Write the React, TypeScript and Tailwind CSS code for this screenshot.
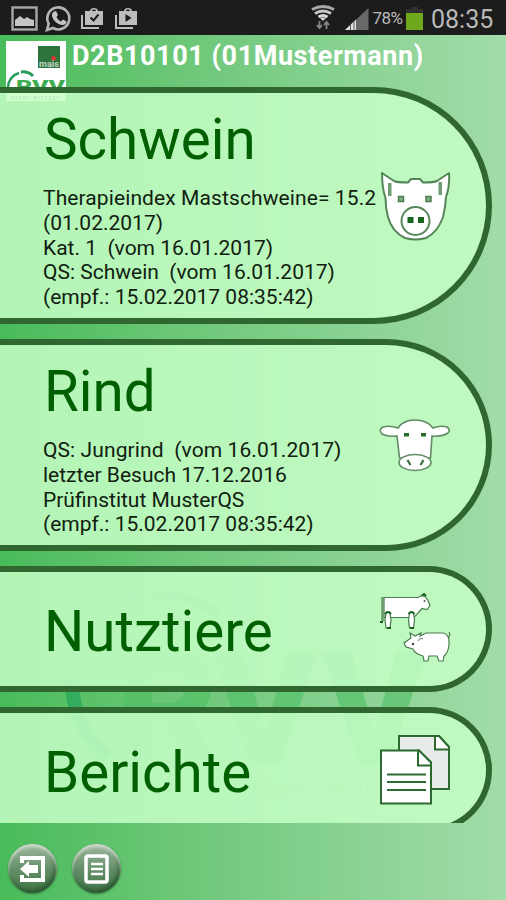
import React from 'react';

const ROBOTO = "font-['Roboto','Liberation_Sans',sans-serif]";

function StatusBar() {
  return (
    <div className="flex h-[35px] shrink-0 items-center bg-[#1c1c1c] text-[#b9b9b9]">
      <svg width="150" height="35" viewBox="0 0 150 35" fill="none">
        <rect x="12.5" y="7.5" width="24" height="22" stroke="#a9a9a9" strokeWidth="2.4" />
        <path d="M15 26v-6l5-4 4 3 3-2 3 2 4 1v6z" fill="#c4c4c4" />
        <path d="M47 30l1.700-6.300a11 11 0 1 1 4.300 4.300z" stroke="#b5b5b5" strokeWidth="2.600" />
        <path d="M54 11.500l2-.5 2 4-1.500 2c1 2 2.500 3.500 4.500 4.500l2-2 3.500 2c0 2.500-2 3.500-4 3.500-5 0-10.500-5.500-10.500-10 0-1.500.8-3 2-3.500z" fill="#c4c4c4" />
        <g fill="#bdbdbd">
          <path d="M81 15v14h18v-2H83V15z" />
          <path d="M85 11h5c0-4 8-4 8 0h5v14H85zM92 11h4c0-2-4-2-4 0z" fillRule="evenodd" />
          <path d="M115 15v14h18v-2h-16V15z" />
          <path d="M119 11h5c0-4 8-4 8 0h5v14h-18zM126 11h4c0-2-4-2-4 0z" fillRule="evenodd" />
        </g>
        <path d="M90.500 17.500l3 3 5-6" stroke="#1c1c1c" strokeWidth="2" />
        <path d="M125.500 14v8l6-4z" fill="#1c1c1c" />
      </svg>
      <svg className="ml-auto" width="62" height="35" viewBox="310 0 62 35" fill="none">
        <g stroke="#a8a8a8" strokeWidth="2.800">
          <path d="M313 9.500q11-6 22 0" />
          <path d="M316 13.500q8-5 16 0" stroke="#c8c8c8" />
          <path d="M319.500 17q4.500-3 9 0" stroke="#d8d8d8" />
        </g>
        <path d="M324 21l-3.500-3.500h7z" fill="#d8d8d8" />
        <path d="M320.500 21v7m-2.500-3l2.500 3 2.500-3M327.500 29v-7m-2.500 3l2.500-3 2.500 3" stroke="#888" strokeWidth="1.800" />
        <path d="M346 30l23.500-22v22z" fill="#686868" />
        <path d="M346 30l11-10.500V30z" fill="#e0e0e0" />
        <path d="M351.500 24v6M355 21v9" stroke="#555" strokeWidth="1" />
      </svg>
      <span className="mt-[2px] w-[35px] whitespace-nowrap pl-[1.500px] text-[17px] leading-none tracking-[-0.6px]">78%</span>
      <svg width="18" height="35" viewBox="0 0 18 35">
        <path d="M5 7h7v2h5v4H0V9h5z" fill="#303030" />
        <rect x="0" y="13" width="17" height="17" fill="#6fa81c" />
      </svg>
      <span className="ml-[7px] mt-[3px] w-[75px] text-[25px] leading-none">08:35</span>
    </div>
  );
}

function CompanyLogo() {
  return (
    <svg className="ml-[6px] mt-[6px] shrink-0" width="60" height="60" viewBox="0 0 60 60">
      <rect width="60" height="60" fill="#fff" />
      <rect x="32" y="5" width="22" height="22" fill="#2c743c" />
      <circle cx="47.500" cy="17.500" r="2.400" fill="#d63a2c" />
      <text x="33" y="26" fontSize="9" fontWeight="700" fill="#c5d2c5" textLength="20" lengthAdjust="spacingAndGlyphs">mais</text>
      <path d="M2 46a15 15 0 0 1 11-14" fill="none" stroke="#279b5a" strokeWidth="2.500" />
      <path d="M15 31q7-1 12 4" fill="none" stroke="#279b5a" strokeWidth="3" />
      <text x="10" y="51" fontSize="17" fontWeight="900" fill="#3cae50" textLength="49" lengthAdjust="spacingAndGlyphs">RVV</text>
      <text x="5" y="58.500" fontSize="4.500" fontWeight="700" fill="#527a52" textLength="48">STORF-WISTEDT</text>
    </svg>
  );
}

function Watermark() {
  return (
    <svg className="absolute left-0 top-[560px]" width="506" height="263" viewBox="0 560 506 263" fill="none">
      <path d="M72 680Q72 728 108 757" stroke="#2aa65c" strokeWidth="14" opacity=".8" />
      <path d="M98 615Q120 596 145 592M153 594Q190 594 220 615" stroke="#42b468" strokeWidth="9" opacity=".45" />
      <text x="116 213 322" y="764" fontSize="158" fontWeight="900" fill="#50c065" opacity=".62">RVV</text>
      <text x="252" y="795" fontSize="17" fill="#65a46c" opacity=".5" textLength="145">STORF – WISTEDT</text>
    </svg>
  );
}

function PigHead() {
  return (
    <svg width="72" height="72" viewBox="0 0 72 72" fill="#fff" stroke="#55865a" strokeWidth="2">
      <path d="M3 3l12 8q3 1.500 14 1.500l3-3.500h9l3 3.500q11 0 14-1.500L70 3q1 13-3 24-.5 10-3 20-5 15-17 21-10 3-21 0Q13 62 9 47 6.500 38 6.500 28 3 18 3 3z" strokeLinejoin="round" />
      <circle cx="36.500" cy="51" r="14" />
      <g fill="#6f9c73" stroke="none">
        <rect x="9" y="13" width="3.500" height="13" />
        <rect x="59.500" y="12" width="3.500" height="13" />
      </g>
      <g fill="#7fae82" stroke="#4c7c50" strokeWidth="1.500">
        <rect x="19.500" y="26.500" width="5" height="5" />
        <rect x="47" y="26.500" width="5" height="5" />
      </g>
      <g fill="#17651c" stroke="none">
        <rect x="28.500" y="47" width="6" height="6" />
        <rect x="39" y="47" width="6" height="6" />
      </g>
    </svg>
  );
}

function CowHead() {
  return (
    <svg width="72" height="54" viewBox="0 0 72 54" fill="#fff" stroke="#618b65" strokeWidth="1.600">
      <path d="M19 10Q24 2 36 2t18 8q7-3 14-1 4 3 1 6-6 4-16 3l-1.500 22h-31L18 18Q9 19 3 16q-4-4 1-7 7-2 15 1z" />
      <ellipse cx="36" cy="44.500" rx="16" ry="8" />
      <path d="M28.500 42l3 5m13-5l-3 5" stroke="#386e3c" strokeWidth="2.200" />
      <path d="M25 15h5v3.500h-5zM42 15h5v3.500h-5z" fill="#24702b" stroke="none" />
    </svg>
  );
}

function CowAndPig() {
  return (
    <svg width="72" height="72" viewBox="0 0 72 72" fill="#fff" stroke="#4a7c4f" strokeWidth="1.200">
      <path d="M5 4.500h34l4-2 3 1 3 4 2 5-3 4-5-1-8 9H5z" />
      <path d="M3.500 4v24" stroke="#6a9a6e" strokeWidth="2.500" />
      <path d="M7 35l-1-8 1-7h4l1 7-1 8zM30.500 35l-1-8 1-7h4l1 7-1 8z" />
      <path d="M6 21q3-4 6 0M29.500 21q3-4 6 0M43 3l2-2 2 2M1 29h3M8 35h4M31 35h4" stroke="#17601c" strokeWidth="2" />
      <circle cx="45.500" cy="8" r="1" fill="#555" stroke="none" />
      <path d="M32 45l-1-5 5 3 6-3-1 3 6-3h17q7 1 6 12-1 8-5 11l-1 5h-4l-2-5H50l-1 5h-4l-1-5q-8-2-10-7l-7-2-2-4z" />
      <path d="M69 45q3-3 1-6" fill="none" />
      <path d="M39 48q3-4 5-2" fill="none" stroke="#888" />
      <circle cx="34" cy="51" r="1.200" fill="#444" stroke="none" />
    </svg>
  );
}

function Documents() {
  return (
    <svg width="72" height="72" viewBox="0 0 72 72" fill="#fff" stroke="#2c6a31" strokeWidth="2">
      <path d="M20 2h40l10 11v42H20z" fill="#e8ece8" />
      <path d="M56 2v13.500h14V13L60 2z" />
      <path d="M2 16.500h38l12 12v41H2z" />
      <path d="M39 16.500v15h13v-3l-12-12zM8 40.500h39M8 48h39M8 56h39" />
    </svg>
  );
}

type CardProps = {
  title: string;
  lines?: string[];
  icon: React.ReactNode;
  className: string;
};

function MenuCard({ title, lines, icon, className }: CardProps) {
  return (
    <div className={`flex w-[492px] shrink-0 items-center justify-between rounded-r-full border-y-[6px] border-r-[6px] border-[#306630] bg-[#c6ffc6]/85 pl-[43px] pr-[35px] ${className}`}>
      <div className="w-0 whitespace-pre pt-[6px]">
        <h2 className="ml-[1px] text-[56.5px] leading-[66px] text-[#005f00]">{title}</h2>
        {lines && (
          <div className="mt-[13px] text-[21px] leading-[24.8px] text-[#10200f] first-line:tracking-[0.1px]">
            {lines.map((line) => (
              <p key={line}>{line}</p>
            ))}
          </div>
        )}
      </div>
      {icon}
    </div>
  );
}

function RoundButton({ children }: { children: React.ReactNode }) {
  return (
    <button className="flex size-[49px] items-center justify-center rounded-full bg-linear-to-b from-[#9fb9a1] via-[#66906a] to-[#3f7545] shadow-[inset_0_3px_3px_#cad8ca,inset_-2px_-3px_4px_#2d5832,0_1px_2px_#397d42]">
      {children}
    </button>
  );
}

export default function App() {
  return (
    <div className={`relative flex h-[900px] w-[506px] flex-col overflow-hidden bg-linear-to-r from-[#48bb5a] to-[#a2dcaa] ${ROBOTO}`}>
      <Watermark />
      <StatusBar />
      <header className="flex h-[52px] shrink-0">
        <CompanyLogo />
        <h1 className="ml-[6px] mt-[5px] whitespace-nowrap text-[27px] font-bold leading-[32px] tracking-[0.57px] text-white">D2B10101 (01Mustermann)</h1>
      </header>

      <main className="relative flex h-[736px] shrink-0 flex-col gap-[15px] overflow-hidden">
        <MenuCard
          className="h-[237px]"
          title="Schwein"
          lines={['Therapieindex Mastschweine= 15.2', '(01.02.2017)', 'Kat. 1  (vom 16.01.2017)', 'QS: Schwein  (vom 16.01.2017)', '(empf.: 15.02.2017 08:35:42)']}
          icon={<PigHead />}
        />
        <MenuCard
          className="h-[212px]"
          title="Rind"
          lines={['QS: Jungrind  (vom 16.01.2017)', 'letzter Besuch 17.12.2016', 'Prüfinstitut MusterQS', '(empf.: 15.02.2017 08:35:42)']}
          icon={<CowHead />}
        />
        <MenuCard className="h-[126px]" title="Nutztiere" icon={<CowAndPig />} />
        <MenuCard className="h-[126px]" title="Berichte" icon={<Documents />} />
      </main>

      <footer className="flex flex-1 gap-[15px] pl-[8px] pt-[21px]">
        <RoundButton>
          <svg width="28" height="28" viewBox="0 0 28 28" fill="none">
            <path d="M3 8V3h21v22H3v-5" stroke="#fff" strokeWidth="4" />
            <path d="M1 14l9-8v4h9v8h-9v4z" fill="#fff" />
          </svg>
        </RoundButton>
        <RoundButton>
          <svg width="26" height="30" viewBox="0 0 26 30" fill="none" stroke="#fff" strokeWidth="3.500">
            <rect x="2" y="2" width="21" height="26" rx="2" />
            <path d="M7 10h12M7 15h12M7 20h12" strokeWidth="2.600" />
          </svg>
        </RoundButton>
      </footer>
    </div>
  );
}
